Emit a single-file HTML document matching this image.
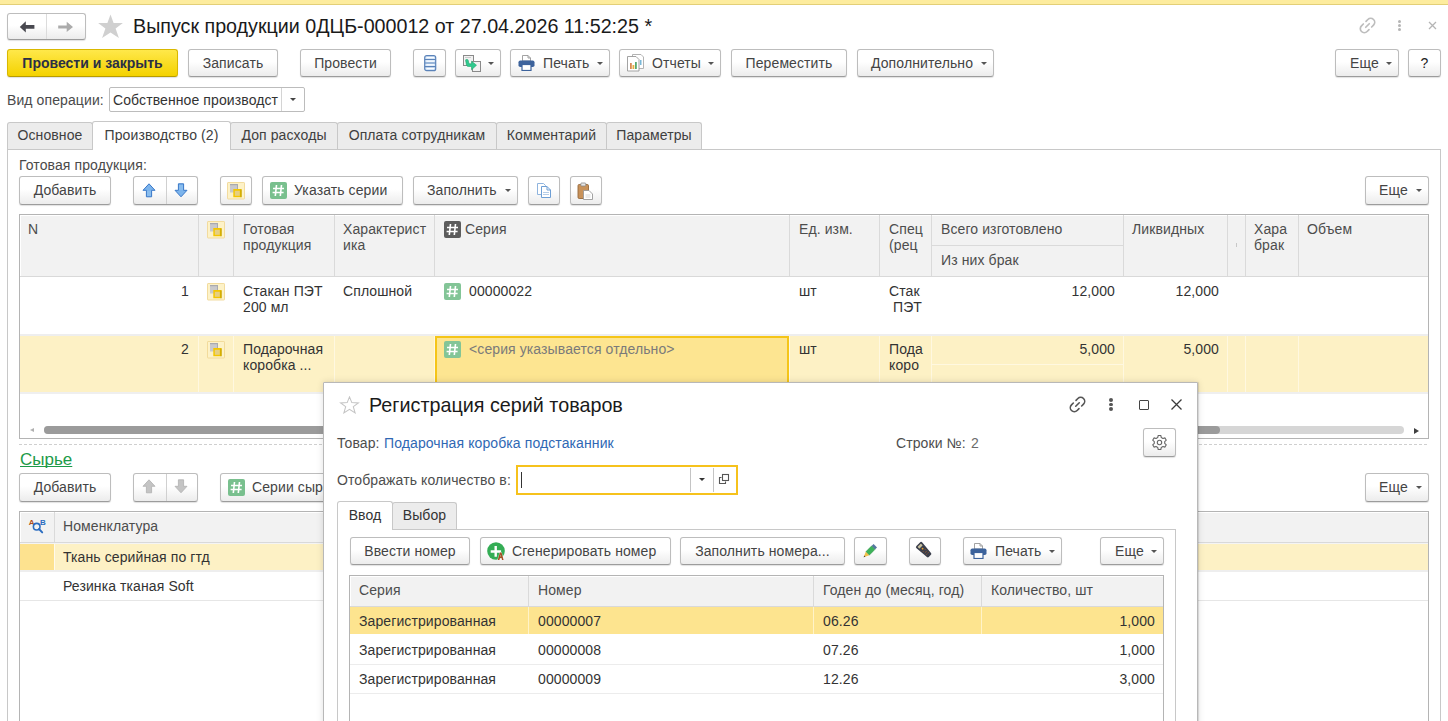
<!DOCTYPE html>
<html><head><meta charset="utf-8">
<style>
*{box-sizing:border-box;margin:0;padding:0}
html,body{width:1448px;height:721px;overflow:hidden;background:#fff}
body{position:relative;font-family:"Liberation Sans",sans-serif;font-size:14px;color:#333;letter-spacing:0.1px}
.a{position:absolute}
.t{position:absolute;white-space:nowrap;line-height:16px}
.btn{position:absolute;border:1px solid #bdbdbd;border-bottom-color:#9c9c9c;border-radius:3px;background:linear-gradient(#fff 0%,#fff 45%,#ececec 100%);box-shadow:0 1px 1px rgba(0,0,0,.12)}
.tab{position:absolute;height:27px;border:1px solid #c8c8c8;border-bottom:none;background:#ececec;color:#404040;line-height:25px;text-align:center;white-space:nowrap;border-radius:3px 3px 0 0}
</style></head><body>
<div class="a" style="left:0px;top:0px;width:1448px;height:4px;background:#fdec9e;"></div>
<div class="a" style="left:0px;top:4px;width:1448px;height:1px;background:#e3cf77;"></div>
<div class="btn" style="left:7px;top:13px;width:79px;height:27px;"></div>
<div class="a" style="left:46px;top:14px;width:1px;height:25px;background:#dcdcdc;"></div>
<svg class="a" style="left:18px;top:20px" width="18" height="14" viewBox="0 0 18 14"><path d="M1.8 6.9 L7.8 1.3 L7.8 5.05 L16.4 5.05 L16.4 8.75 L7.8 8.75 L7.8 12.4 Z" fill="#48484f"/></svg>
<svg class="a" style="left:56px;top:20px" width="18" height="14" viewBox="0 0 18 14"><path d="M17 6.95 L10.7 1.8 L10.7 5.4 L2.2 5.4 L2.2 8.5 L10.7 8.5 L10.7 12.1 Z" fill="#ababab"/></svg>
<svg class="a" style="left:97.5px;top:14px" width="25" height="25" viewBox="0 0 25 25"><path d="M12.5 0.4 L15.6 9 L24.9 9 L17.6 14.6 L20.9 24.1 L12.5 18.4 L4.1 24.1 L7.4 14.6 L0.1 9 L9.4 9 Z" fill="#d0d0d0"/></svg>
<div class="t" style="left:133px;top:14px;font-size:19.7px;line-height:24px;letter-spacing:0;color:#1a1a1a">Выпуск продукции 0ДЦБ-000012 от 27.04.2026 11:52:25 *</div>
<svg class="a" style="left:1358px;top:16px" width="19" height="19" viewBox="0 0 19 19"><g transform="rotate(-45 9.5 9.5)" fill="none" stroke="#bdbdbd" stroke-width="1.7" stroke-linecap="round"><path d="M7.6 5.5 H5 A4 4 0 0 0 5 13.5 H7.6"/><path d="M11.4 5.5 H14 A4 4 0 0 1 14 13.5 H11.4"/><path d="M7 9.5 H12"/></g></svg>
<div class="a" style="left:1398px;top:19.5px;width:3px;height:3px;border-radius:2px;background:#b5b5b5"></div>
<div class="a" style="left:1398px;top:23.8px;width:3px;height:3px;border-radius:2px;background:#b5b5b5"></div>
<div class="a" style="left:1398px;top:28.1px;width:3px;height:3px;border-radius:2px;background:#b5b5b5"></div>
<svg class="a" style="left:1427.5px;top:20.8px" width="9" height="9" viewBox="0 0 9 9"><path d="M1 1 L8 8 M8 1 L1 8" stroke="#b5b5b5" stroke-width="1.3"/></svg>
<div class="btn" style="left:7px;top:49px;width:171px;height:28px;background:linear-gradient(#ffe84a,#f4d200);border-color:#d9b800;border-bottom-color:#b89c00"></div>
<div class="t" style="left:7px;top:55px;font-weight:bold;color:#2b2f45;letter-spacing:0;width:171px;text-align:center">Провести и закрыть</div>
<div class="btn" style="left:188px;top:49px;width:90px;height:28px;"></div>
<div class="t" style="left:188px;width:90px;text-align:center;top:55px;color:#444">Записать</div>
<div class="btn" style="left:300px;top:49px;width:91px;height:28px;"></div>
<div class="t" style="left:300px;width:91px;text-align:center;top:55px;color:#444">Провести</div>
<div class="btn" style="left:413px;top:49px;width:33px;height:28px;"></div>
<svg class="a" style="left:424px;top:55px" width="13" height="17" viewBox="0 0 13 17"><rect x="0.7" y="0.7" width="11" height="15" rx="2" fill="#d6e6f8" stroke="#5b83b9" stroke-width="1.2"/><path d="M1 4.5 H11.7 M1 8 H11.7 M1 11.6 H11.7" stroke="#5b83b9" stroke-width="1.1"/><path d="M2.5 2.6 H10 M2.5 6.2 H10 M2.5 9.8 H10 M2.5 13.4 H10" stroke="#fff" stroke-width="1"/></svg>
<div class="btn" style="left:455px;top:49px;width:46px;height:28px;"></div>
<div class="a" style="left:488px;top:62px;width:0;height:0;border-left:3px solid transparent;border-right:3px solid transparent;border-top:3px solid #555"></div>
<svg class="a" style="left:462px;top:54px" width="20" height="19" viewBox="0 0 20 19"><rect x="1.5" y="1.5" width="10" height="10" fill="#f2f2f2" stroke="#8a8a8a"/><rect x="3" y="3" width="6" height="1" fill="#ccc"/><rect x="10.5" y="7.5" width="8" height="10" fill="#f2f2f2" stroke="#8a8a8a"/><path d="M4.2 5.5 Q3.5 5.5 3.6 6.5 L4.5 11 Q4.8 12.5 6.5 12.5 L9.5 12.5 L9.5 15.8 L14.5 11.2 L9.5 7.2 L9.5 9.8 L7.8 9.8 Q7 9.8 6.8 9 L6.2 6.3 Q6 5.5 5.2 5.5 Z" fill="#2ec98e" stroke="#1ea56a" stroke-width=".6"/></svg>
<div class="btn" style="left:510px;top:49px;width:100px;height:28px;"></div>
<div class="t" style="left:543px;top:55px;color:#444">Печать</div>
<div class="a" style="left:597px;top:62px;width:0;height:0;border-left:3px solid transparent;border-right:3px solid transparent;border-top:3px solid #555"></div>
<svg class="a" style="left:518px;top:55px" width="17" height="16" viewBox="0 0 17 16"><path d="M4.5 0.5 H10 L12.5 3 V6 H4.5 Z" fill="#fff" stroke="#999" stroke-width=".9"/><path d="M10 0.5 V3 H12.5" fill="none" stroke="#999" stroke-width=".9"/><rect x="0.5" y="5.5" width="16" height="6.5" rx="1.8" fill="#3d639c"/><rect x="4" y="9.5" width="9" height="6" fill="#fff" stroke="#3d639c" stroke-width="1.2"/></svg>
<div class="btn" style="left:619px;top:49px;width:102px;height:28px;"></div>
<div class="t" style="left:652px;top:55px;color:#444">Отчеты</div>
<div class="a" style="left:708px;top:62px;width:0;height:0;border-left:3px solid transparent;border-right:3px solid transparent;border-top:3px solid #555"></div>
<svg class="a" style="left:627px;top:54px" width="18" height="18" viewBox="0 0 18 18"><path d="M5.5 0.5 H14 L16.5 3 V14.5 H5.5 Z" fill="#fff" stroke="#aaa" stroke-width=".9"/><path d="M0.5 2.5 H9 L12 5.5 V17 H0.5 Z" fill="#fff" stroke="#999" stroke-width=".9"/><rect x="3" y="9" width="1.8" height="6" fill="#d98a55"/><rect x="5.5" y="11" width="1.8" height="4" fill="#e8b040"/><rect x="8" y="8" width="1.8" height="7" fill="#5aaa70"/><rect x="13" y="6" width="1.5" height="5" fill="#7ab8d8"/></svg>
<div class="btn" style="left:731px;top:49px;width:116px;height:28px;"></div>
<div class="t" style="left:731px;width:116px;text-align:center;top:55px;color:#444">Переместить</div>
<div class="btn" style="left:857px;top:49px;width:137px;height:28px;"></div>
<div class="t" style="left:871px;top:55px;color:#444">Дополнительно</div>
<div class="a" style="left:981px;top:62px;width:0;height:0;border-left:3px solid transparent;border-right:3px solid transparent;border-top:3px solid #555"></div>
<div class="btn" style="left:1335px;top:49px;width:64px;height:28px;"></div>
<div class="t" style="left:1350px;top:55px;color:#444">Еще</div>
<div class="a" style="left:1386px;top:62px;width:0;height:0;border-left:3px solid transparent;border-right:3px solid transparent;border-top:3px solid #555"></div>
<div class="btn" style="left:1408px;top:49px;width:33px;height:28px;"></div>
<div class="t" style="left:1408px;top:55px;color:#222;width:33px;text-align:center">?</div>
<div class="t" style="left:7px;top:92px;color:#4a4a4a">Вид операции:</div>
<div class="a" style="left:109px;top:87px;width:196px;height:25px;border:1px solid #bcbcbc;border-radius:2px;background:#fff"></div>
<div class="t" style="left:113px;top:92px;color:#333">Собственное производст</div>
<div class="a" style="left:281px;top:88px;width:1px;height:23px;background:#d4d4d4;"></div>
<div class="a" style="left:290px;top:98px;width:0;height:0;border-left:3px solid transparent;border-right:3px solid transparent;border-top:3px solid #444"></div>
<div class="tab" style="left:7px;top:122px;width:86px;height:27px;color:#404040">Основное</div>
<div class="tab" style="left:92px;top:121px;width:139px;height:29px;color:#404040;background:#fff;z-index:2;line-height:27px">Производство (2)</div>
<div class="tab" style="left:230px;top:122px;width:108px;height:27px;color:#404040">Доп расходы</div>
<div class="tab" style="left:337px;top:122px;width:160px;height:27px;color:#404040">Оплата сотрудникам</div>
<div class="tab" style="left:496px;top:122px;width:111px;height:27px;color:#404040">Комментарий</div>
<div class="tab" style="left:606px;top:122px;width:96px;height:27px;color:#404040">Параметры</div>
<div class="a" style="left:7px;top:149px;width:1434px;height:580px;border:1px solid #c8c8c8;border-bottom:none"></div>
<div class="t" style="left:19px;top:157px;color:#4a4a4a">Готовая продукция:</div>
<div class="btn" style="left:19px;top:176px;width:92px;height:29px;"></div>
<div class="t" style="left:19px;width:92px;text-align:center;top:182px;color:#444">Добавить</div>
<div class="btn" style="left:133px;top:176px;width:65px;height:29px;"></div>
<div class="a" style="left:166px;top:177px;width:1px;height:27px;background:#d0d0d0;"></div>
<svg class="a" style="left:142px;top:183px" width="14" height="15" viewBox="0 0 14 15"><path d="M7 .8 L13 7.3 L9.6 7.3 L9.6 13.8 L4.4 13.8 L4.4 7.3 L1 7.3 Z" fill="#7cb4ec" stroke="#3a78c8" stroke-width="1"/><path d="M6 8 V13 M8 8 V13" stroke="#a8d0f4" stroke-width=".7"/></svg>
<svg class="a" style="left:174px;top:183px" width="14" height="15" viewBox="0 0 14 15"><path d="M7 13.8 L13 7.3 L9.6 7.3 L9.6 .8 L4.4 .8 L4.4 7.3 L1 7.3 Z" fill="#7cb4ec" stroke="#3a78c8" stroke-width="1"/><path d="M6 2 V7 M8 2 V7" stroke="#a8d0f4" stroke-width=".7"/></svg>
<div class="btn" style="left:220px;top:176px;width:32px;height:29px;"></div>
<svg class="a" style="left:227px;top:182px" width="18" height="18" viewBox="0 0 18 18"><rect x="0.5" y="0.5" width="17" height="16.5" rx=".6" fill="#fdf2c8" stroke="#f0d896" stroke-width=".9"/><rect x="3" y="2" width="8" height="8.5" fill="#c9c9cb"/><rect x="3" y="2" width="8" height="1.2" fill="#a9a9ad"/><rect x="10" y="3" width="1" height="7.5" fill="#a9a9ad"/><rect x="6.3" y="7" width="8.2" height="8.2" fill="#f4c600"/><rect x="13.5" y="7.5" width="1" height="7.7" fill="#b89800"/><rect x="7.8" y="8.8" width="5" height="5" fill="#e6cf82"/></svg>
<div class="btn" style="left:262px;top:176px;width:141px;height:29px;"></div>
<div class="t" style="left:294px;top:182px;color:#444">Указать серии</div>
<svg class="a" style="left:270px;top:182px" width="17" height="17" viewBox="0 0 17 17"><rect x="0" y="0" width="17" height="17" rx="2" fill="#79c08e"/><path d="M6.5 3 L5.3 14 M11.5 3 L10.3 14 M3 6.5 H14 M2.6 10.5 H13.6" stroke="#fff" stroke-width="1.6"/></svg>
<div class="btn" style="left:413px;top:176px;width:105px;height:29px;"></div>
<div class="t" style="left:427px;top:182px;color:#444">Заполнить</div>
<div class="a" style="left:505px;top:189px;width:0;height:0;border-left:3px solid transparent;border-right:3px solid transparent;border-top:3px solid #555"></div>
<div class="btn" style="left:528px;top:176px;width:32px;height:29px;"></div>
<svg class="a" style="left:536px;top:182px" width="16" height="17" viewBox="0 0 16 17"><path d="M1.5 1.5 H7.5 L9.5 3.5 V12.5 H1.5 Z" fill="#fff" stroke="#8fb4de"/><path d="M5.5 4.5 H11 L14.5 8 V15.5 H5.5 Z" fill="#fff" stroke="#6e9fd5"/><path d="M11 4.5 V8 H14.5" fill="none" stroke="#6e9fd5"/><path d="M7 10.5 H13 M7 12.5 H13" stroke="#b5cde8"/></svg>
<div class="btn" style="left:570px;top:176px;width:32px;height:29px;"></div>
<svg class="a" style="left:577px;top:182px" width="17" height="18" viewBox="0 0 17 18"><rect x="1" y="2.5" width="10.5" height="14" rx="1.2" fill="#c8925a" stroke="#94683a" stroke-width=".9"/><rect x="3.8" y="1" width="5" height="3" rx=".8" fill="#e8e8e8" stroke="#888" stroke-width=".8"/><path d="M6.5 8.5 H12 L15.5 12 V17.5 H6.5 Z" fill="#fff" stroke="#999" stroke-width=".9"/><path d="M8.5 13 H13.5 M8.5 15 H13.5" stroke="#ccc" stroke-width=".8"/></svg>
<div class="btn" style="left:1365px;top:176px;width:64px;height:29px;"></div>
<div class="t" style="left:1379px;top:182px;color:#444">Еще</div>
<div class="a" style="left:1416px;top:189px;width:0;height:0;border-left:3px solid transparent;border-right:3px solid transparent;border-top:3px solid #555"></div>
<div class="a" style="left:19px;top:214px;width:1410px;height:225px;border:1px solid #b4b4b4;background:#fff"></div>
<div class="a" style="left:21px;top:216px;width:1407px;height:60px;background:#f2f2f2;"></div>
<div class="a" style="left:20px;top:276px;width:1408px;height:1px;background:#d9d9d9;"></div>
<div class="a" style="left:198px;top:215px;width:1px;height:61px;background:#dadada;"></div>
<div class="a" style="left:233px;top:215px;width:1px;height:61px;background:#dadada;"></div>
<div class="a" style="left:334px;top:215px;width:1px;height:61px;background:#dadada;"></div>
<div class="a" style="left:434px;top:215px;width:1px;height:61px;background:#dadada;"></div>
<div class="a" style="left:789px;top:215px;width:1px;height:61px;background:#dadada;"></div>
<div class="a" style="left:879px;top:215px;width:1px;height:61px;background:#dadada;"></div>
<div class="a" style="left:931px;top:215px;width:1px;height:61px;background:#dadada;"></div>
<div class="a" style="left:1123px;top:215px;width:1px;height:61px;background:#dadada;"></div>
<div class="a" style="left:1227px;top:215px;width:1px;height:61px;background:#dadada;"></div>
<div class="a" style="left:1245px;top:215px;width:1px;height:61px;background:#dadada;"></div>
<div class="a" style="left:1298px;top:215px;width:1px;height:61px;background:#dadada;"></div>
<div class="a" style="left:932px;top:245px;width:191px;height:1px;background:#dadada;"></div>
<div class="a" style="left:20px;top:334px;width:1408px;height:2px;background:#eeeeee;"></div>
<div class="a" style="left:20px;top:336px;width:1408px;height:56px;background:#fdf1c5;"></div>
<div class="a" style="left:20px;top:392px;width:1408px;height:2px;background:#efefef;"></div>
<div class="a" style="left:198px;top:336px;width:1px;height:56px;background:#fff8e0;"></div>
<div class="a" style="left:233px;top:336px;width:1px;height:56px;background:#fff8e0;"></div>
<div class="a" style="left:334px;top:336px;width:1px;height:56px;background:#fff8e0;"></div>
<div class="a" style="left:434px;top:336px;width:1px;height:56px;background:#fff8e0;"></div>
<div class="a" style="left:789px;top:336px;width:1px;height:56px;background:#fff8e0;"></div>
<div class="a" style="left:879px;top:336px;width:1px;height:56px;background:#fff8e0;"></div>
<div class="a" style="left:931px;top:336px;width:1px;height:56px;background:#fff8e0;"></div>
<div class="a" style="left:1123px;top:336px;width:1px;height:56px;background:#fff8e0;"></div>
<div class="a" style="left:1227px;top:336px;width:1px;height:56px;background:#fff8e0;"></div>
<div class="a" style="left:1245px;top:336px;width:1px;height:56px;background:#fff8e0;"></div>
<div class="a" style="left:1298px;top:336px;width:1px;height:56px;background:#fff8e0;"></div>
<div class="a" style="left:932px;top:364px;width:191px;height:1px;background:#fff8e0;"></div>
<div class="a" style="left:435px;top:336px;width:354px;height:56px;background:#fde591;border:2px solid #f5c518"></div>
<div class="t" style="left:28px;top:221px;color:#4d4d4d">N</div>
<svg class="a" style="left:207px;top:221px" width="18" height="18" viewBox="0 0 18 18"><rect x="0.5" y="0.5" width="17" height="16.5" rx=".6" fill="#fdf2c8" stroke="#f0d896" stroke-width=".9"/><rect x="3" y="2" width="8" height="8.5" fill="#c9c9cb"/><rect x="3" y="2" width="8" height="1.2" fill="#a9a9ad"/><rect x="10" y="3" width="1" height="7.5" fill="#a9a9ad"/><rect x="6.3" y="7" width="8.2" height="8.2" fill="#f4c600"/><rect x="13.5" y="7.5" width="1" height="7.7" fill="#b89800"/><rect x="7.8" y="8.8" width="5" height="5" fill="#e6cf82"/></svg>
<div class="t" style="left:243px;top:221px;color:#4d4d4d">Готовая<br>продукция</div>
<div class="t" style="left:343px;top:221px;color:#4d4d4d">Характерист<br>ика</div>
<svg class="a" style="left:444px;top:221px" width="17" height="17" viewBox="0 0 17 17"><rect x="0" y="0" width="17" height="17" rx="2" fill="#5c5c5c"/><path d="M6.5 3 L5.3 14 M11.5 3 L10.3 14 M3 6.5 H14 M2.6 10.5 H13.6" stroke="#fff" stroke-width="1.6"/></svg>
<div class="t" style="left:465px;top:221px;color:#4d4d4d">Серия</div>
<div class="t" style="left:799px;top:221px;color:#4d4d4d">Ед. изм.</div>
<div class="t" style="left:889px;top:221px;color:#4d4d4d">Спец<br>(рец</div>
<div class="t" style="left:941px;top:221px;color:#4d4d4d">Всего изготовлено</div>
<div class="t" style="left:941px;top:252px;color:#4d4d4d">Из них брак</div>
<div class="t" style="left:1132px;top:221px;color:#4d4d4d">Ликвидных</div>
<div class="t" style="left:1254px;top:221px;color:#4d4d4d">Хара<br>брак</div>
<div class="t" style="left:1307px;top:221px;color:#4d4d4d">Объем</div>
<div class="a" style="left:1236px;top:243px;width:1px;height:4px;background:#c8c8c8;"></div>
<div class="t" style="left:150px;top:283px;color:#333;width:39px;text-align:right">1</div>
<svg class="a" style="left:207px;top:283px" width="18" height="18" viewBox="0 0 18 18"><rect x="0.5" y="0.5" width="17" height="16.5" rx=".6" fill="#fdf2c8" stroke="#f0d896" stroke-width=".9"/><rect x="3" y="2" width="8" height="8.5" fill="#c9c9cb"/><rect x="3" y="2" width="8" height="1.2" fill="#a9a9ad"/><rect x="10" y="3" width="1" height="7.5" fill="#a9a9ad"/><rect x="6.3" y="7" width="8.2" height="8.2" fill="#f4c600"/><rect x="13.5" y="7.5" width="1" height="7.7" fill="#b89800"/><rect x="7.8" y="8.8" width="5" height="5" fill="#e6cf82"/></svg>
<div class="t" style="left:243px;top:283px;color:#333">Стакан ПЭТ<br>200 мл</div>
<div class="t" style="left:343px;top:283px;color:#333">Сплошной</div>
<svg class="a" style="left:444px;top:283px" width="17" height="17" viewBox="0 0 17 17"><rect x="0" y="0" width="17" height="17" rx="2" fill="#83c597"/><path d="M6.5 3 L5.3 14 M11.5 3 L10.3 14 M3 6.5 H14 M2.6 10.5 H13.6" stroke="#fff" stroke-width="1.6"/></svg>
<div class="t" style="left:469px;top:283px;color:#333">00000022</div>
<div class="t" style="left:799px;top:283px;color:#333">шт</div>
<div class="t" style="left:889px;top:283px;color:#333">Стак<br>&nbsp;ПЭТ</div>
<div class="t" style="left:1000px;top:283px;color:#333;width:115px;text-align:right">12,000</div>
<div class="t" style="left:1100px;top:283px;color:#333;width:119px;text-align:right">12,000</div>
<div class="t" style="left:150px;top:341px;color:#333;width:39px;text-align:right">2</div>
<svg class="a" style="left:207px;top:341px" width="18" height="18" viewBox="0 0 18 18"><rect x="0.5" y="0.5" width="17" height="16.5" rx=".6" fill="#fdf2c8" stroke="#f0d896" stroke-width=".9"/><rect x="3" y="2" width="8" height="8.5" fill="#c9c9cb"/><rect x="3" y="2" width="8" height="1.2" fill="#a9a9ad"/><rect x="10" y="3" width="1" height="7.5" fill="#a9a9ad"/><rect x="6.3" y="7" width="8.2" height="8.2" fill="#f4c600"/><rect x="13.5" y="7.5" width="1" height="7.7" fill="#b89800"/><rect x="7.8" y="8.8" width="5" height="5" fill="#e6cf82"/></svg>
<div class="t" style="left:243px;top:341px;color:#333">Подарочная<br>коробка ...</div>
<svg class="a" style="left:444px;top:341px" width="17" height="17" viewBox="0 0 17 17"><rect x="0" y="0" width="17" height="17" rx="2" fill="#83c597"/><path d="M6.5 3 L5.3 14 M11.5 3 L10.3 14 M3 6.5 H14 M2.6 10.5 H13.6" stroke="#fff" stroke-width="1.6"/></svg>
<div class="t" style="left:469px;top:341px;color:#7a7a7a">&lt;серия указывается отдельно&gt;</div>
<div class="t" style="left:799px;top:341px;color:#333">шт</div>
<div class="t" style="left:889px;top:341px;color:#333">Пода<br>коро</div>
<div class="t" style="left:1000px;top:341px;color:#333;width:115px;text-align:right">5,000</div>
<div class="t" style="left:1100px;top:341px;color:#333;width:119px;text-align:right">5,000</div>
<div class="a" style="left:44px;top:426px;width:1360px;height:8px;border-radius:4px;background:#d6d6d6"></div>
<div class="a" style="left:44px;top:426px;width:1176px;height:8px;border-radius:4px;background:#9b9b9b"></div>
<div class="a" style="left:30px;top:428px;width:0;height:0;border-top:2.5px solid transparent;border-bottom:2.5px solid transparent;border-right:4px solid #b0b0b0"></div>
<div class="a" style="left:1414px;top:428px;width:0;height:0;border-top:3px solid transparent;border-bottom:3px solid transparent;border-left:5px solid #404040"></div>
<div class="a" style="left:19px;top:444px;width:1410px;height:1px;background:repeating-linear-gradient(90deg,#cfcfcf 0 3px,transparent 3px 5px);"></div>
<div class="t" style="left:20px;top:451px;font-size:17px;line-height:18px;letter-spacing:0;color:#1c9a48;text-decoration:underline;text-decoration-skip-ink:none">Сырье</div>
<div class="btn" style="left:19px;top:473px;width:92px;height:29px;"></div>
<div class="t" style="left:19px;width:92px;text-align:center;top:479px;color:#444">Добавить</div>
<div class="btn" style="left:133px;top:473px;width:65px;height:29px;"></div>
<div class="a" style="left:166px;top:474px;width:1px;height:27px;background:#d0d0d0;"></div>
<svg class="a" style="left:142px;top:479px" width="14" height="15" viewBox="0 0 14 15"><path d="M7 .8 L13 7.3 L9.6 7.3 L9.6 13.8 L4.4 13.8 L4.4 7.3 L1 7.3 Z" fill="#c4c4c4" stroke="#b0b0b0" stroke-width=".8"/></svg>
<svg class="a" style="left:174px;top:479px" width="14" height="15" viewBox="0 0 14 15"><path d="M7 13.8 L13 7.3 L9.6 7.3 L9.6 .8 L4.4 .8 L4.4 7.3 L1 7.3 Z" fill="#c4c4c4" stroke="#b0b0b0" stroke-width=".8"/></svg>
<div class="btn" style="left:220px;top:473px;width:141px;height:29px;"></div>
<div class="t" style="left:252px;top:479px;color:#444">Серии сырья</div>
<svg class="a" style="left:228px;top:479px" width="17" height="17" viewBox="0 0 17 17"><rect x="0" y="0" width="17" height="17" rx="2" fill="#79c08e"/><path d="M6.5 3 L5.3 14 M11.5 3 L10.3 14 M3 6.5 H14 M2.6 10.5 H13.6" stroke="#fff" stroke-width="1.6"/></svg>
<div class="btn" style="left:1365px;top:473px;width:64px;height:29px;"></div>
<div class="t" style="left:1379px;top:479px;color:#444">Еще</div>
<div class="a" style="left:1416px;top:486px;width:0;height:0;border-left:3px solid transparent;border-right:3px solid transparent;border-top:3px solid #555"></div>
<div class="a" style="left:19px;top:511px;width:1410px;height:230px;border:1px solid #b4b4b4;background:#fff"></div>
<div class="a" style="left:21px;top:513px;width:1407px;height:29px;background:#f2f2f2;"></div>
<div class="a" style="left:20px;top:542px;width:1408px;height:1px;background:#d9d9d9;"></div>
<div class="a" style="left:54px;top:512px;width:1px;height:30px;background:#dadada;"></div>
<div class="a" style="left:20px;top:543px;width:1408px;height:1px;background:#f4f4f4;"></div>
<div class="a" style="left:20px;top:544px;width:1408px;height:26px;background:#fdf1c5;"></div>
<div class="a" style="left:20px;top:544px;width:34px;height:26px;background:#fde28f;"></div>
<div class="a" style="left:54px;top:544px;width:1px;height:26px;background:#fffaec;"></div>
<div class="a" style="left:20px;top:570px;width:1408px;height:2px;background:#eeeeee;"></div>
<div class="a" style="left:20px;top:600px;width:1408px;height:1px;background:#e6e6e6;"></div>
<svg class="a" style="left:26px;top:516px" width="20" height="20" viewBox="0 0 20 20"><text x="2.7" y="8.8" font-size="8" fill="#b0501c" font-family="Liberation Sans" font-weight="bold">A</text><text x="14" y="8.6" font-size="8" fill="#2a6cc0" font-family="Liberation Sans" font-weight="bold">B</text><circle cx="10.7" cy="10.7" r="3.3" fill="none" stroke="#2a6cc0" stroke-width="1.6"/><path d="M13 13 L16.2 16.4" stroke="#2a6cc0" stroke-width="1.9" stroke-linecap="round"/></svg>
<div class="t" style="left:63px;top:518px;color:#4d4d4d">Номенклатура</div>
<div class="t" style="left:63px;top:549px;color:#333">Ткань серийная по гтд</div>
<div class="t" style="left:63px;top:578px;color:#333">Резинка тканая Soft</div>
<div class="a" style="left:323px;top:382px;width:875px;height:360px;border:1px solid #b8b8b8;border-radius:1px 1px 0 0;background:#fff;box-shadow:1px 0 1px rgba(0,0,0,.12),0 0 7px rgba(0,0,0,.13)"></div>
<svg class="a" style="left:339px;top:396px" width="21" height="18" viewBox="0 0 21 18"><path d="M10.5 .9 L12.8 6.6 L19.4 6.9 L14.3 10.7 L16.1 16.9 L10.5 13.4 L4.9 16.9 L6.7 10.7 L1.6 6.9 L8.2 6.6 Z" fill="none" stroke="#c4c4c4" stroke-width="1.05" stroke-linejoin="miter"/></svg>
<div class="t" style="left:369px;top:393px;font-size:19.75px;line-height:24px;letter-spacing:0;color:#1a1a1a">Регистрация серий товаров</div>
<svg class="a" style="left:1068px;top:395px" width="19" height="19" viewBox="0 0 19 19"><g transform="rotate(-45 9.5 9.5)" fill="none" stroke="#555" stroke-width="1.6" stroke-linecap="round"><path d="M7.6 5.5 H5 A4 4 0 0 0 5 13.5 H7.6"/><path d="M11.4 5.5 H14 A4 4 0 0 1 14 13.5 H11.4"/><path d="M7 9.5 H12"/></g></svg>
<div class="a" style="left:1109.3px;top:398.3px;width:3.6px;height:3.6px;border-radius:2px;background:#555"></div>
<div class="a" style="left:1109.3px;top:402.8px;width:3.6px;height:3.6px;border-radius:2px;background:#555"></div>
<div class="a" style="left:1109.3px;top:407.3px;width:3.6px;height:3.6px;border-radius:2px;background:#555"></div>
<div class="a" style="left:1139px;top:400px;width:10px;height:10px;border:1.5px solid #444;border-radius:1px"></div>
<svg class="a" style="left:1170px;top:398px" width="13" height="13" viewBox="0 0 13 13"><path d="M1.5 1.5 L11.5 11.5 M11.5 1.5 L1.5 11.5" stroke="#3a3a3a" stroke-width="1.25"/></svg>
<div class="t" style="left:337px;top:435px;color:#4d4d4d">Товар:</div>
<div class="t" style="left:384px;top:435px;color:#2f68b4">Подарочная коробка подстаканник</div>
<div class="t" style="left:896px;top:435px;color:#4d4d4d">Строки №:</div>
<div class="t" style="left:971px;top:435px;color:#6b6b6b">2</div>
<div class="btn" style="left:1143px;top:428px;width:33px;height:29px;"></div>
<svg class="a" style="left:1151px;top:434px" width="17" height="17" viewBox="0 0 17 17"><path d="M7.2 1.5 H9.8 L10.3 3.6 L11.9 4.5 L14 3.9 L15.3 6.2 L13.7 7.7 V9.3 L15.3 10.8 L14 13.1 L11.9 12.5 L10.3 13.4 L9.8 15.5 H7.2 L6.7 13.4 L5.1 12.5 L3 13.1 L1.7 10.8 L3.3 9.3 V7.7 L1.7 6.2 L3 3.9 L5.1 4.5 L6.7 3.6 Z" fill="none" stroke="#666" stroke-width="1.1" stroke-linejoin="round"/><circle cx="8.5" cy="8.5" r="2.2" fill="none" stroke="#666" stroke-width="1.1"/></svg>
<div class="t" style="left:337px;top:472px;color:#4d4d4d">Отображать количество в:</div>
<div class="a" style="left:516px;top:465px;width:222px;height:30px;border:2px solid #f6c21c;background:#fff"></div>
<div class="a" style="left:521px;top:472px;width:1px;height:16px;background:#333;"></div>
<div class="a" style="left:690px;top:468px;width:1px;height:24px;background:#c4c4c4;"></div>
<div class="a" style="left:713px;top:468px;width:1px;height:24px;background:#c4c4c4;"></div>
<div class="a" style="left:699px;top:478px;width:0;height:0;border-left:3px solid transparent;border-right:3px solid transparent;border-top:3px solid #333"></div>
<svg class="a" style="left:718px;top:473px" width="12" height="12" viewBox="0 0 12 12"><rect x="4.5" y="1.5" width="6" height="6" fill="none" stroke="#555" stroke-width="1.1"/><path d="M3.5 4.5 H1.5 V10.5 H7.5 V8.5" fill="none" stroke="#555" stroke-width="1.1"/></svg>
<div class="a" style="left:337px;top:529px;width:839px;height:220px;border:1px solid #c8c8c8;border-bottom:none"></div>
<div class="tab" style="left:337px;top:501px;width:56px;height:29px;color:#333;background:#fff;z-index:2;line-height:27px">Ввод</div>
<div class="tab" style="left:392px;top:502px;width:65px;height:27px;color:#333">Выбор</div>
<div class="btn" style="left:350px;top:537px;width:120px;height:28px;"></div>
<div class="t" style="left:350px;width:120px;text-align:center;top:543px;color:#444">Ввести номер</div>
<div class="btn" style="left:480px;top:537px;width:191px;height:28px;"></div>
<div class="t" style="left:512px;top:543px;color:#444">Сгенерировать номер</div>
<svg class="a" style="left:486px;top:541px" width="20" height="20" viewBox="0 0 20 20"><circle cx="10" cy="10" r="8.8" fill="#34ad55"/><path d="M9.7 5 V15.8 M4.7 10.5 H15.1" stroke="#fff" stroke-width="2.4"/><path d="M11.2 19 L13.7 11 L15.7 11 L18.2 19 Z" fill="#fff" opacity=".6"/><path d="M11.8 19 L13.9 11.4 L15.5 11.4 L17.6 19 L16 19 L15.5 17 L13.9 17 L13.4 19 Z M14.2 15.6 H15.2 L14.7 13.4 Z" fill="#a84d22" fill-rule="evenodd"/></svg>
<div class="btn" style="left:680px;top:537px;width:165px;height:28px;"></div>
<div class="t" style="left:680px;width:165px;text-align:center;top:543px;color:#444">Заполнить номера...</div>
<div class="btn" style="left:854px;top:537px;width:33px;height:28px;"></div>
<svg class="a" style="left:860px;top:541px" width="20" height="20" viewBox="0 0 20 20"><g transform="rotate(45 10 10)"><path d="M7.6 2.5 H12.4 V5.5 H7.6 Z" fill="#5577a0"/><path d="M7.6 5.5 H12.4 V13.5 H7.6 Z" fill="#3db35a" stroke="#2a8a40" stroke-width=".5"/><path d="M7.6 13.5 H12.4 L10 19 Z" fill="#f2c14a"/><path d="M9.2 17.2 H10.8 L10 19 Z" fill="#444"/></g></svg>
<div class="btn" style="left:909px;top:537px;width:32px;height:28px;"></div>
<svg class="a" style="left:914px;top:540px" width="20" height="20" viewBox="0 0 20 20"><g transform="rotate(-45 10 10)"><path d="M7.5 1.8 H12.5 Q14.2 1.8 14.1 3.5 L12.9 17 Q12.8 18.3 11.5 18.3 H8.5 Q7.2 18.3 7.1 17 L5.9 3.5 Q5.8 1.8 7.5 1.8 Z" fill="#3b3f4c"/><rect x="7.6" y="3.2" width="4.8" height="2.6" rx=".6" fill="#c9c2a0"/><circle cx="10" cy="8" r=".9" fill="#f0a020"/><path d="M8.4 10.5 h.8 M10.6 10.5 h.8 M8.6 12.7 h.8 M10.6 12.7 h.8 M8.7 14.9 h.8 M10.5 14.9 h.8" stroke="#c86a20" stroke-width=".9"/></g></svg>
<div class="btn" style="left:963px;top:537px;width:99px;height:28px;"></div>
<div class="t" style="left:995px;top:543px;color:#444">Печать</div>
<div class="a" style="left:1049px;top:550px;width:0;height:0;border-left:3px solid transparent;border-right:3px solid transparent;border-top:3px solid #555"></div>
<svg class="a" style="left:970px;top:543px" width="17" height="16" viewBox="0 0 17 16"><path d="M4.5 0.5 H10 L12.5 3 V6 H4.5 Z" fill="#fff" stroke="#999" stroke-width=".9"/><path d="M10 0.5 V3 H12.5" fill="none" stroke="#999" stroke-width=".9"/><rect x="0.5" y="5.5" width="16" height="6.5" rx="1.8" fill="#3d639c"/><rect x="4" y="9.5" width="9" height="6" fill="#fff" stroke="#3d639c" stroke-width="1.2"/></svg>
<div class="btn" style="left:1100px;top:537px;width:64px;height:28px;"></div>
<div class="t" style="left:1115px;top:543px;color:#444">Еще</div>
<div class="a" style="left:1151px;top:550px;width:0;height:0;border-left:3px solid transparent;border-right:3px solid transparent;border-top:3px solid #555"></div>
<div class="a" style="left:349px;top:575px;width:815px;height:180px;border:1px solid #b4b4b4;background:#fff"></div>
<div class="a" style="left:351px;top:577px;width:812px;height:29px;background:#f2f2f2;"></div>
<div class="a" style="left:350px;top:606px;width:813px;height:1px;background:#d9d9d9;"></div>
<div class="a" style="left:528px;top:576px;width:1px;height:30px;background:#dadada;"></div>
<div class="a" style="left:813px;top:576px;width:1px;height:30px;background:#dadada;"></div>
<div class="a" style="left:981px;top:576px;width:1px;height:30px;background:#dadada;"></div>
<div class="a" style="left:350px;top:607px;width:813px;height:27px;background:#fde48f;"></div>
<div class="a" style="left:528px;top:607px;width:1px;height:27px;background:#fff3c8;"></div>
<div class="a" style="left:813px;top:607px;width:1px;height:27px;background:#fff3c8;"></div>
<div class="a" style="left:981px;top:607px;width:1px;height:27px;background:#fff3c8;"></div>
<div class="a" style="left:350px;top:664px;width:813px;height:1px;background:#ececec;"></div>
<div class="a" style="left:350px;top:693px;width:813px;height:1px;background:#ececec;"></div>
<div class="t" style="left:359px;top:582px;color:#4d4d4d">Серия</div>
<div class="t" style="left:538px;top:582px;color:#4d4d4d">Номер</div>
<div class="t" style="left:823px;top:582px;color:#4d4d4d">Годен до (месяц, год)</div>
<div class="t" style="left:991px;top:582px;color:#4d4d4d">Количество, шт</div>
<div class="t" style="left:359px;top:613px;color:#333">Зарегистрированная</div>
<div class="t" style="left:538px;top:613px;color:#333">00000007</div>
<div class="t" style="left:823px;top:613px;color:#333">06.26</div>
<div class="t" style="left:1000px;top:613px;color:#333;width:155px;text-align:right">1,000</div>
<div class="t" style="left:359px;top:642px;color:#333">Зарегистрированная</div>
<div class="t" style="left:538px;top:642px;color:#333">00000008</div>
<div class="t" style="left:823px;top:642px;color:#333">07.26</div>
<div class="t" style="left:1000px;top:642px;color:#333;width:155px;text-align:right">1,000</div>
<div class="t" style="left:359px;top:671px;color:#333">Зарегистрированная</div>
<div class="t" style="left:538px;top:671px;color:#333">00000009</div>
<div class="t" style="left:823px;top:671px;color:#333">12.26</div>
<div class="t" style="left:1000px;top:671px;color:#333;width:155px;text-align:right">3,000</div>
</body></html>
